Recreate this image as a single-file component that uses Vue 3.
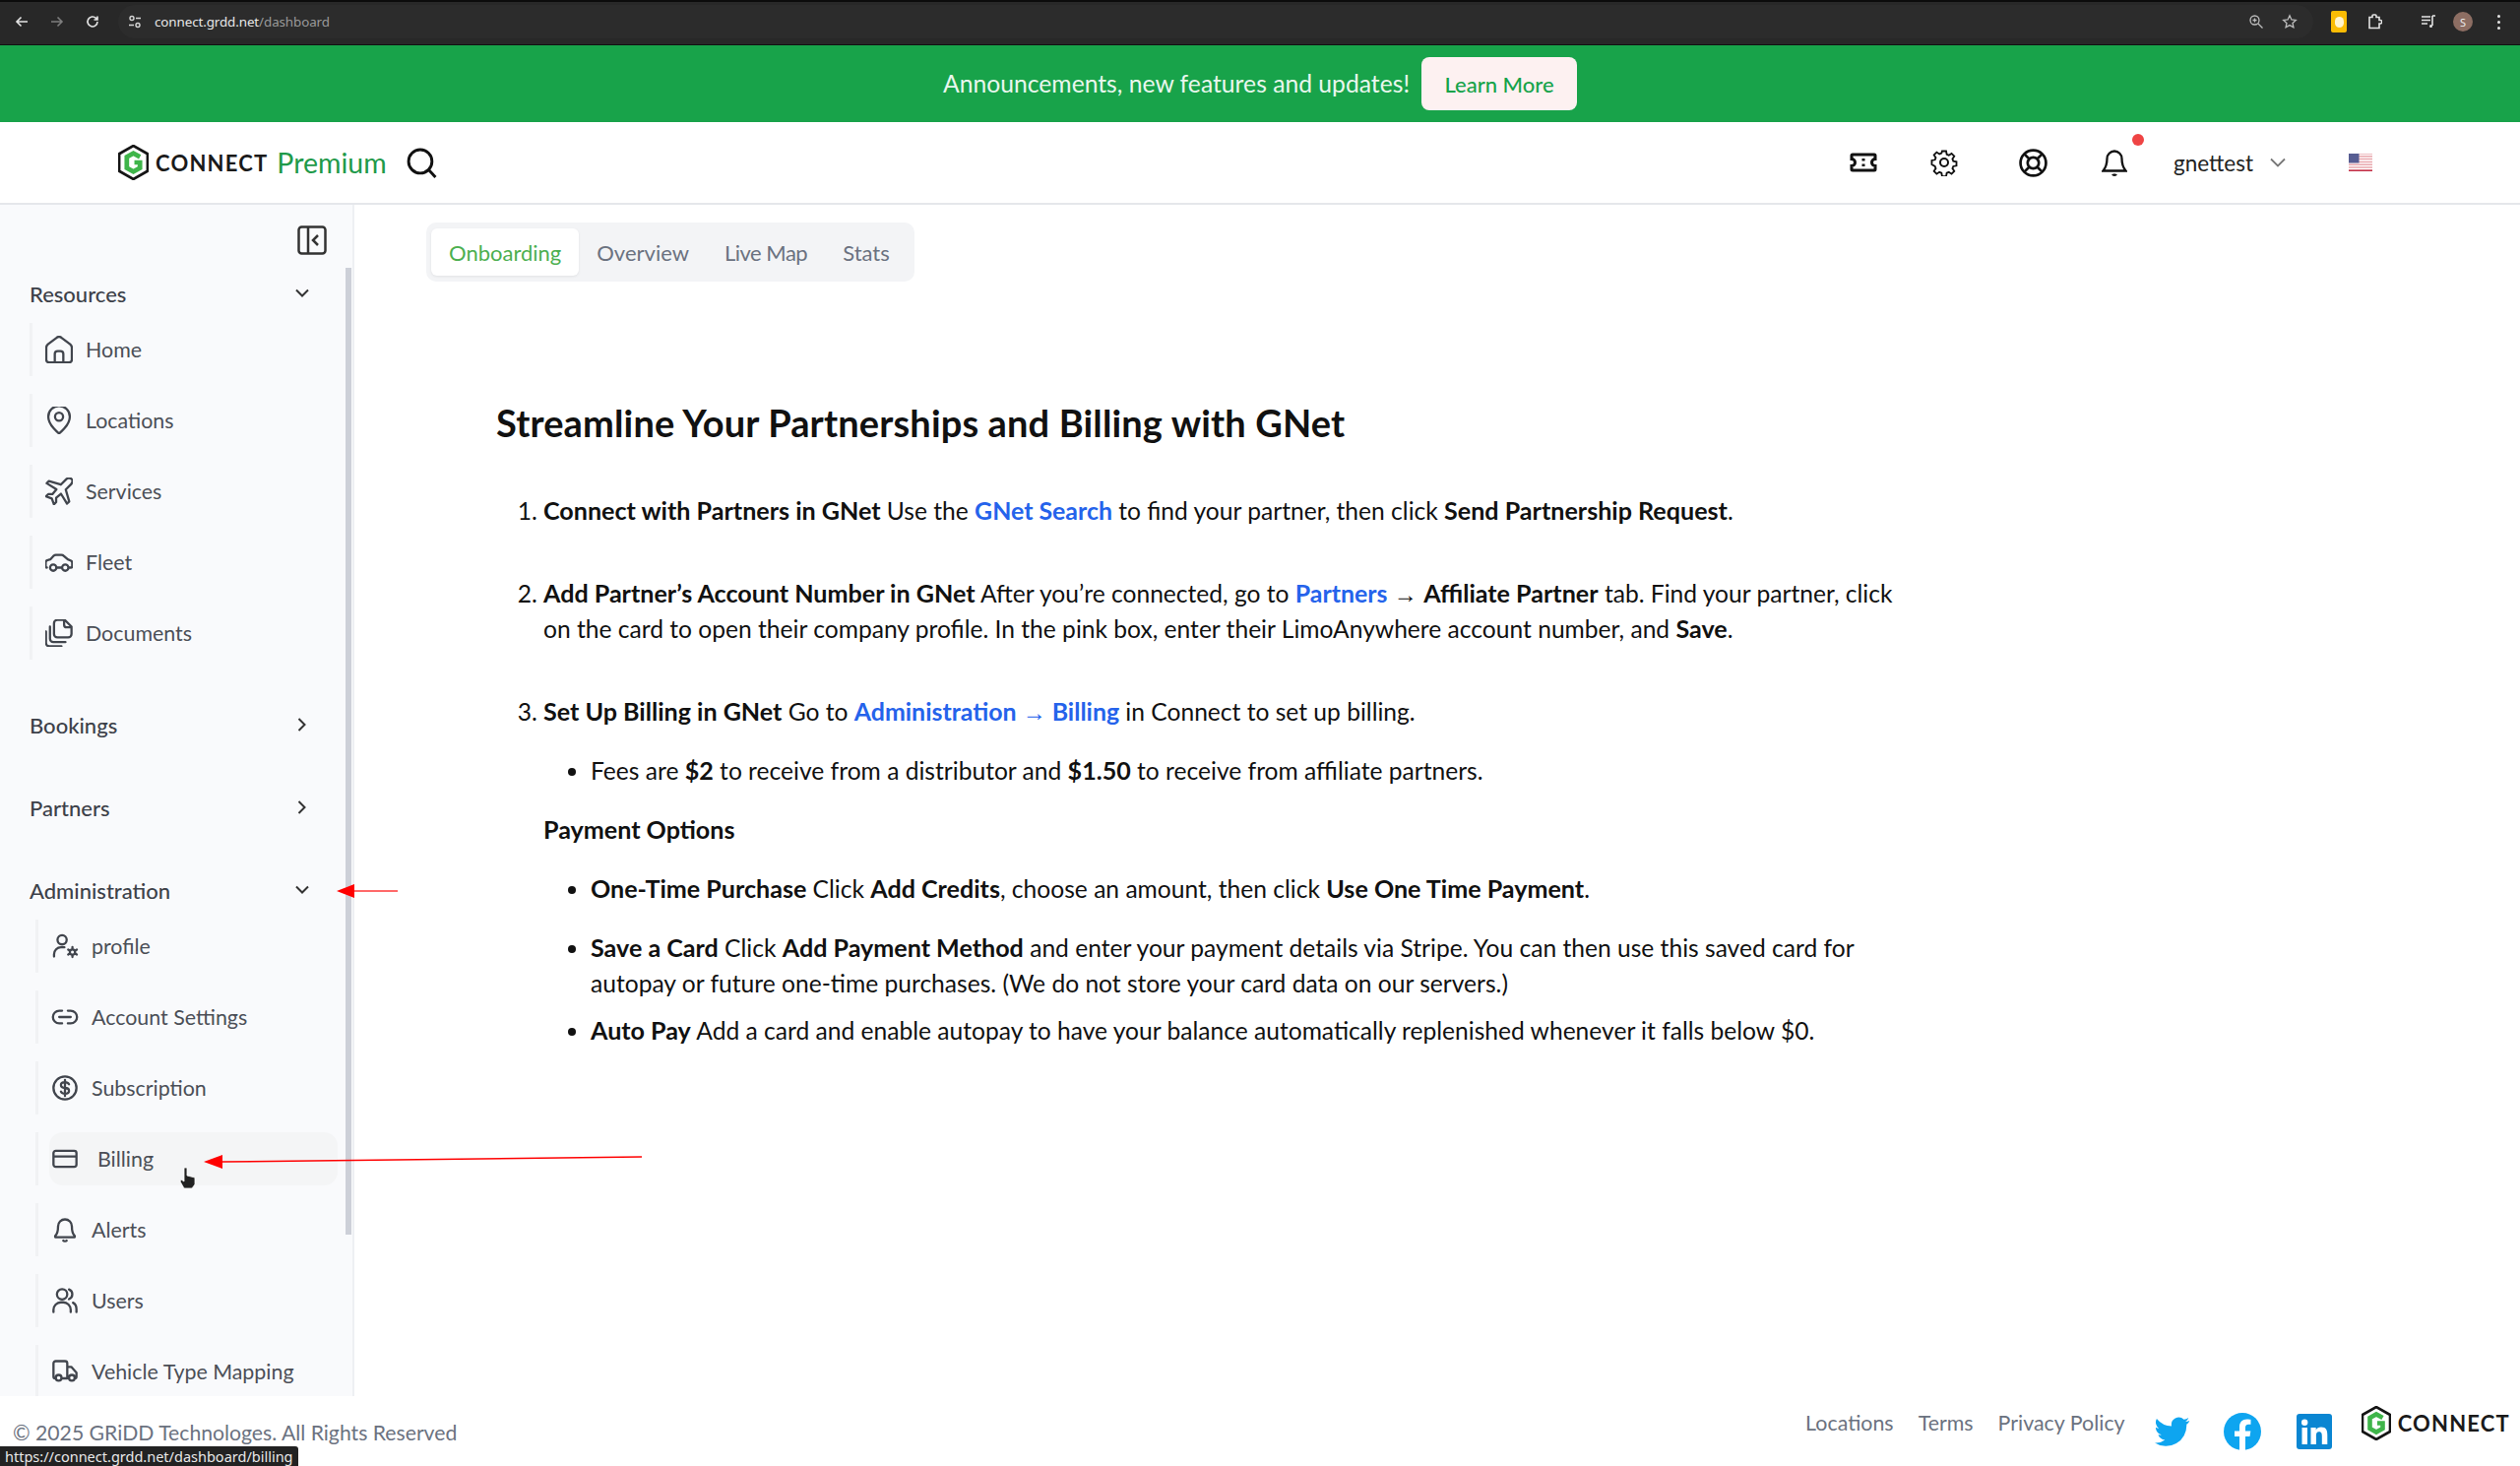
<script setup>
const resources = [
  { label: 'Home', icon: 'home' },
  { label: 'Locations', icon: 'pin' },
  { label: 'Services', icon: 'plane' },
  { label: 'Fleet', icon: 'car' },
  { label: 'Documents', icon: 'docs' },
]
const admin = [
  { label: 'profile', icon: 'usergear' },
  { label: 'Account Settings', icon: 'link' },
  { label: 'Subscription', icon: 'dollar' },
  { label: 'Billing', icon: 'card', hover: true },
  { label: 'Alerts', icon: 'bell' },
  { label: 'Users', icon: 'users' },
  { label: 'Vehicle Type Mapping', icon: 'truck' },
]
const paths = {
  home: 'M3 10.500c0-1 .5-1.700 1.200-2.300L10 3.800a3 3 0 0 1 4 0l5.800 4.400c.7.6 1.200 1.300 1.200 2.300V19a2 2 0 0 1-2 2H5a2 2 0 0 1-2-2Z M9 21v-6a2 2 0 0 1 2-2h2a2 2 0 0 1 2 2v6',
  pin: 'M12 22S4 16 4 9.500a8 8 0 0 1 16 0C20 16 12 22 12 22Z M12 12.500a3 3 0 1 0 0-6 3 3 0 0 0 0 6Z',
  plane: 'M20.500 3.500c-1-1-2.700-.7-3.800.4l-3.500 3.500L5 5 3.500 6.500 10.200 10.700 7.400 14H4.500L3 15.500l4 1.500 1.500 4 1.500-1.500v-3l3.300-2.800 4.200 6.800 1.500-1.500-2.400-8.200 3.500-3.500c1.100-1.100 1.400-2.800.9-3.300Z',
  car: 'M2.500 17C1.800 17 1.500 16.500 1.500 16v-3c0-1 .7-1.800 1.700-2l2-.5L8 7.500c.5-.4 1-.5 1.500-.5H14c.7 0 1.300.2 1.800.7l3.200 2.800 2.500 1c.7.400 1 1 1 1.700V16c0 .6-.4 1-1 1h-1 M9.800 17h4.500 M7.500 19.500a2.500 2.500 0 1 0 0-5 2.500 2.500 0 0 0 0 5Z M17 19.500a2.500 2.500 0 1 0 0-5 2.500 2.500 0 0 0 0 5Z',
  docs: 'M11 2.500h5.500l5 5V13a2.500 2.500 0 0 1-2.500 2.500h-8A2.500 2.500 0 0 1 8.500 13V5A2.500 2.500 0 0 1 11 2.500Z M16 2.500V6a2 2 0 0 0 2 2h3.500 M5.500 7.500v9a2.500 2.500 0 0 0 2.500 2.500h9 M2.500 11v8.500A2.500 2.500 0 0 0 5 22h9',
  usergear: 'M9.500 10.500a4 4 0 1 0 0-8 4 4 0 0 0 0 8Z M2.500 21v-2a6 6 0 0 1 6-6h3 M18.500 19.500a2.300 2.300 0 1 0 0-4.600 2.300 2.300 0 0 0 0 4.600Z M18.500 12.800v2 M18.500 19.500v2 M14.800 15l1.700 1 M20.600 18.300l1.700 1 M14.800 19.300l1.700-1 M20.600 16l1.700-1',
  link: 'M9.500 6.500H7a5.500 5.500 0 0 0 0 11h2.500 M14.500 6.500H17a5.500 5.500 0 0 1 0 11h-2.500 M7 12h10',
  dollar: 'M12 22a10 10 0 1 0 0-20 10 10 0 0 0 0 20Z M15.500 8.800c-.6-1.100-1.900-1.800-3.500-1.800-2 0-3.500 1-3.500 2.500S10 12 12 12s3.500 1 3.500 2.500S14 17 12 17c-1.600 0-2.900-.7-3.500-1.800 M12 5v14',
  card: 'M4 5h16a2 2 0 0 1 2 2v10a2 2 0 0 1-2 2H4a2 2 0 0 1-2-2V7a2 2 0 0 1 2-2Z M2 10h20',
  bell: 'M6 9a6 6 0 0 1 12 0c0 5 1 7 2.500 8.500v1h-17v-1C5 16 6 14 6 9Z M10.500 21.500c.5.700 2.500.700 3 0',
  users: 'M9.500 11a4.500 4.500 0 1 0 0-9 4.500 4.500 0 0 0 0 9Z M2 22v-2a6.500 6.500 0 0 1 6.500-6.500h2A6.500 6.500 0 0 1 17 20v2 M15.500 2.300a4.500 4.500 0 0 1 0 8.400 M19 13.800c2 1 3 3.200 3 5.700v2.500',
  truck: 'M3.500 18C2.700 18 2 17.300 2 16.500V5a2 2 0 0 1 2-2h8a2 2 0 0 1 2 2v13 M9.500 18H14 M14 8h3.500l4.500 5v3.500c0 .8-.7 1.500-1.500 1.500 M6.500 20a2.500 2.500 0 1 0 0-5 2.500 2.500 0 0 0 0 5Z M18 20a2.500 2.500 0 1 0 0-5 2.500 2.500 0 0 0 0 5Z',
}
const boxes = {
  home: '2.300 2.200 19.400 19.400',
  pin: '2 2 20 20.500',
  plane: '2.500 2.500 19 19',
  car: '1.200 1.800 21.800 21.800',
  docs: '2 2 20.500 20.500',
}
const box = (k) => boxes[k] || '0 0 24 24'
const hexOuter = 'M15 1 29 9v17L15 34 1 26V9Z'
const gMark = 'M21.500 12 15 8.400 8.500 12v11l6.500 3.600 6.500-3.600v-5.500H16'
</script>

<template>
  <div class="page">
    <div class="chrome">
      <div class="nav">
        <svg class="ci" viewBox="0 0 16 16"><path d="M14 8H3M7.500 3.500 3 8l4.500 4.500" /></svg>
        <svg class="ci dim" viewBox="0 0 16 16"><path d="M2 8h11M8.500 3.500 13 8l-4.500 4.500" /></svg>
        <svg class="ci" viewBox="0 0 16 16"><path d="M13 8a5 5 0 1 1-1.500-3.600L13 6M13 2.500V6H9.500" /></svg>
      </div>
      <div class="omni">
        <svg class="tune" viewBox="0 0 16 16"><circle cx="5" cy="4.500" r="2" /><path d="M9 4.500h5M2 11.500h5" /><circle cx="11" cy="11.500" r="2" /></svg>
        <span class="url">connect.grdd.net<span class="urlDim">/dashboard</span></span>
        <div class="omniRight">
          <svg class="ci small" viewBox="0 0 16 16"><circle cx="6.500" cy="6.500" r="4.500" /><path d="m10 10 4.500 4.500M6.500 4.500v4M4.500 6.500h4" /></svg>
          <svg class="ci small" viewBox="0 0 16 16"><path d="m8 1.800 1.900 4.100 4.400.5-3.300 3 .9 4.400L8 11.600l-3.900 2.200.9-4.400-3.300-3 4.400-.5Z" /></svg>
        </div>
      </div>
      <div class="exts">
        <span class="keep"><i class="bulb"></i></span>
        <svg class="ci ext" viewBox="0 0 16 16"><path d="M3 3.500h3V2a1 1 0 0 1 1-1h2a1 1 0 0 1 1 1v1.500h3v3h1a1.700 1.700 0 0 1 0 3.500h-1v4.500H3Z" /></svg>
        <svg class="ci media" viewBox="0 0 16 16"><path d="M1 3h9M1 6.500h9M1 10h6M12 2h3M12 2v10" /><circle cx="10.500" cy="12.500" r="1.500" class="fillw" /></svg>
        <span class="avatar">S</span>
        <span class="dots"><i></i><i></i><i></i></span>
      </div>
    </div>

    <div class="banner">
      <span class="bannerText">Announcements, new features and updates!</span>
      <button class="learn">Learn More</button>
    </div>

    <header class="top">
      <div class="brand">
        <svg class="hex" viewBox="0 0 30 35"><path :d="hexOuter" fill="#fff" stroke="#151515" stroke-width="2.600" stroke-linejoin="round" /><path :d="gMark" fill="none" stroke="#3fb54a" stroke-width="4.600" /></svg>
        <span class="connect">CONNECT</span>
        <span class="premium">Premium</span>
        <svg class="search" viewBox="0 0 30 30"><circle cx="13.500" cy="13.500" r="11.500" /><path d="m22 22 6.500 7" /></svg>
      </div>
      <div class="tools">
        <svg class="tool ticket" viewBox="0 0 28 20"><path d="M3 2h22a1 1 0 0 1 1 1v3.500a3.500 3.500 0 0 0 0 7V17a1 1 0 0 1-1 1H3a1 1 0 0 1-1-1v-3.500a3.500 3.500 0 0 0 0-7V3a1 1 0 0 1 1-1Z" /><path d="M14 6v2.500M14 11.500V14" /></svg>
        <svg class="tool gear" viewBox="0 0 28 28"><circle cx="14" cy="14" r="4" /><path d="M11.800 1.500h4.400l.7 3.600 2.300 1 3-2 3 3.100-2 3 .9 2.300 3.500.7v4.400l-3.500.7-.9 2.300 2 3-3 3.100-3-2-2.300 1-.7 3.600h-4.400l-.7-3.600-2.300-1-3 2-3-3.100 2-3-.9-2.300L.4 16.200v-4.400l3.500-.7.900-2.300-2-3 3-3.100 3 2 2.300-1Z" transform="translate(1.100 1.100) scale(.92)" /></svg>
        <svg class="tool ring" viewBox="0 0 28 28"><circle cx="14" cy="14" r="12.500" /><circle cx="14" cy="14" r="5.500" /><path d="m5.200 5.200 5 5M22.800 5.200l-5 5M5.200 22.800l5-5M22.800 22.800l-5-5" /></svg>
        <div class="bellWrap">
          <svg class="tool bellTop" viewBox="0 0 26 28"><path d="M5.500 10a7.500 7.500 0 0 1 15 0c0 6 1.500 9.500 4 12.500h-23C4 19.500 5.500 16 5.500 10Z" /><path d="M11 26c.6 1 3.400 1 4 0" /></svg>
          <i class="redDot"></i>
        </div>
        <span class="user">gnettest</span>
        <svg class="userChev" viewBox="0 0 16 10"><path d="m1 1.500 7 7 7-7" /></svg>
        <svg class="flag" viewBox="0 0 24 18"><rect width="24" height="18" fill="#e8a7ad" /><path d="M0 1.400h24M0 4.200h24M0 7h24M0 9.800h24M0 12.600h24M0 15.400h24" stroke="#fff" stroke-width="1.300" /><path d="M0 17.300h24" stroke="#c4344c" stroke-width="1.400" /><rect width="10.500" height="9.500" fill="#575d92" /></svg>
      </div>
    </header>

    <div class="main">
      <aside class="side">
        <div class="collapseRow">
          <svg class="collapse" viewBox="0 0 30 30"><rect x="1.500" y="1.500" width="27" height="27" rx="3" /><path d="M11 2v26M21 10l-5 5 5 5" /></svg>
        </div>
        <div class="secHead first"><span>Resources</span><svg class="chev" viewBox="0 0 16 10"><path d="m2 1.500 6 6 6-6" /></svg></div>
        <ul class="items">
          <li v-for="it in resources" :key="it.label" class="item">
            <svg class="ico" :viewBox="box(it.icon)"><path :d="paths[it.icon]" /></svg>
            <span>{{ it.label }}</span>
          </li>
        </ul>
        <div class="secHead closed bookings"><span>Bookings</span><svg class="chev right" viewBox="0 0 10 16"><path d="m1.500 2 6 6-6 6" /></svg></div>
        <div class="secHead closed"><span>Partners</span><svg class="chev right" viewBox="0 0 10 16"><path d="m1.500 2 6 6-6 6" /></svg></div>
        <div class="secHead closed"><span>Administration</span><svg class="chev" viewBox="0 0 16 10"><path d="m2 1.500 6 6 6-6" /></svg></div>
        <ul class="items nested">
          <li v-for="it in admin" :key="it.label" class="item" :class="{ hovered: it.hover }">
            <svg class="ico" :viewBox="box(it.icon)"><path :d="paths[it.icon]" /></svg>
            <span>{{ it.label }}</span>
          </li>
        </ul>
        <div class="scrollThumb"></div>
      </aside>

      <main class="content">
        <nav class="tabs">
          <span class="tab active">Onboarding</span>
          <span class="tab">Overview</span>
          <span class="tab">Live Map</span>
          <span class="tab">Stats</span>
        </nav>
        <article class="doc">
          <h1>Streamline Your Partnerships and Billing with GNet</h1>
          <ol>
            <li><b>Connect with Partners in GNet</b> Use the <a>GNet Search</a> to find your partner, then click <b>Send Partnership Request</b>.</li>
            <li><b>Add Partner’s Account Number in GNet</b> After you’re connected, go to <a>Partners</a> <span class="arr">→</span> <b>Affiliate Partner</b> tab. Find your partner, click on the card to open their company profile. In the pink box, enter their LimoAnywhere account number, and <b>Save</b>.</li>
            <li><b>Set Up Billing in GNet</b> Go to <a>Administration <span class="arr">→</span> Billing</a> in Connect to set up billing.
              <ul class="fees"><li>Fees are <b>$2</b> to receive from a distributor and <b>$1.50</b> to receive from affiliate partners.</li></ul>
              <p><b>Payment Options</b></p>
              <ul class="opts">
                <li><b>One-Time Purchase</b> Click <b>Add Credits</b>, choose an amount, then click <b>Use One Time Payment</b>.</li>
                <li><b>Save a Card</b> Click <b>Add Payment Method</b> and enter your payment details via Stripe. You can then use this saved card for autopay or future one-time purchases. (We do not store your card data on our servers.)</li>
                <li><b>Auto Pay</b> Add a card and enable autopay to have your balance automatically replenished whenever it falls below $0.</li>
              </ul>
            </li>
          </ol>
        </article>
      </main>
    </div>

    <footer class="foot">
      <span class="copy">© 2025 GRiDD Technologes. All Rights Reserved</span>
      <div class="footRight">
        <a>Locations</a><a>Terms</a><a>Privacy Policy</a>
        <svg class="twitter" viewBox="0 0 24 24"><path fill="#0ea5f0" d="M23.500 4.600c-.9.400-1.800.7-2.800.8 1-.6 1.800-1.600 2.100-2.700-.9.600-2 1-3.100 1.200A4.900 4.900 0 0 0 11.400 8.400 13.900 13.900 0 0 1 1.300 3.300a4.900 4.900 0 0 0 1.500 6.500c-.8 0-1.500-.2-2.200-.6 0 2.400 1.700 4.400 3.900 4.900-.7.200-1.500.2-2.200.1.600 1.900 2.400 3.300 4.600 3.400A9.900 9.900 0 0 1 0 19.600 13.900 13.900 0 0 0 21.500 7.200c1-.7 1.800-1.600 2-2.600Z" /></svg>
        <svg class="fb" viewBox="0 0 38 38"><circle cx="19" cy="19" r="19" fill="#0ea5f0" /><path fill="#fff" d="M16 38V24h-5v-5.500h5v-4.200c0-5 3-7.800 7.500-7.800 2.200 0 4 .3 4 .3v4.900h-2.300c-2.400 0-3.200 1.500-3.200 3v3.800h5.400l-.9 5.500h-4.500v14Z" /></svg>
        <svg class="li" viewBox="0 0 36 36"><rect width="36" height="36" rx="3" fill="#0a86d2" /><rect x="5.500" y="14" width="5.500" height="17" fill="#fff" /><circle cx="8.200" cy="8.800" r="3.200" fill="#fff" /><path fill="#fff" d="M14.500 14h5.200v2.400c.8-1.500 2.700-2.800 5.300-2.800 5.300 0 6.300 3.500 6.300 8V31h-5.500v-8.300c0-2-.1-4.500-2.800-4.500s-3.100 2.100-3.100 4.400V31h-5.400Z" /></svg>
        <div class="footLogo">
          <svg class="hex" viewBox="0 0 30 35"><path :d="hexOuter" fill="#fff" stroke="#151515" stroke-width="2.600" stroke-linejoin="round" /><path :d="gMark" fill="none" stroke="#3fb54a" stroke-width="4.600" /></svg>
          <span class="connect">CONNECT</span>
        </div>
      </div>
    </footer>

    <div class="status">https://connect.grdd.net/dashboard/billing</div>

    <svg class="arrows" viewBox="0 0 2560 1489" width="2560" height="1489">
      <path d="M360 905h44" stroke="#ff6a6a" stroke-width="2" />
      <path d="M342 905 360 898v14Z" fill="#f00" />
      <path d="M226 1180 652 1175" stroke="#f00" stroke-width="1.500" />
      <path d="M207 1180 226 1173v14Z" fill="#f00" />
      <path d="M187 1186h3v8l8 2v7l-3 4h-8l-4-7 1-2 3 2Z" fill="#222" stroke="#fff" stroke-width=".8" />
    </svg>
  </div>
</template>

<style>
html, body { margin: 0; background: #fff; }
</style>

<style scoped>
.page { position: relative; width: 2560px; height: 1489px; overflow: hidden; font-family: "Lato", "Open Sans", sans-serif; color: #111; display: flex; flex-direction: column; background: #fff; }
.chrome { height: 46px; box-sizing: border-box; background: #282828; border-top: 2px solid #0c0c0c; border-bottom: 1px solid #111; display: flex; align-items: center; padding: 0 0 3px 14px; }
.nav { display: flex; gap: 20px; width: 106px; }
.ci { width: 16px; height: 16px; fill: none; stroke: #e3e3e3; stroke-width: 1.600; }
.ci.dim { stroke: #7d7d7d; }
.omni { width: 2230px; height: 34px; box-sizing: border-box; background: #2c2c2c; border-radius: 17px; display: flex; align-items: center; padding: 0 16px 0 9px; }
.tune { width: 16px; height: 16px; fill: none; stroke: #d5d5d5; stroke-width: 1.400; margin-right: 12px; }
.url { font-family: "Noto Sans", sans-serif; font-size: 13.400px; color: #e8e8e8; letter-spacing: -.1px; }
.urlDim { color: #9a9a9a; }
.omniRight { margin-left: auto; display: flex; gap: 18px; }
.ci.small { stroke: #bdbdbd; stroke-width: 1.300; }
.exts { display: flex; align-items: center; margin-left: 18px; }
.keep { width: 16px; height: 22px; border-radius: 2px; background: #fbbc04; display: flex; align-items: center; justify-content: center; }
.bulb { width: 9px; height: 11px; border-radius: 5px; background: #fff4d0; }
.ci.ext { margin-left: 20px; }
.ci.media { margin-left: 39px; }
.fillw { fill: #e3e3e3; stroke: none; }
.avatar { margin-left: 17px; width: 20px; height: 20px; border-radius: 50%; background: #8d6e63; color: #ececec; font-family: "Noto Sans", sans-serif; font-size: 11px; display: flex; align-items: center; justify-content: center; }
.dots { margin-left: 25px; display: flex; flex-direction: column; gap: 3px; }
.dots i { width: 3px; height: 3px; border-radius: 50%; background: #e3e3e3; display: block; }

.banner { height: 78px; background: #18a34a; display: flex; align-items: center; justify-content: center; gap: 12px; }
.bannerText { color: #e9f7ee; font-size: 24.700px; transform: translateY(-1px); }
.learn { width: 158px; height: 54px; border: 0; border-radius: 8px; background: #fdf1f1; color: #16a34a; font: 500 22px "Lato", sans-serif; }

.top { height: 84px; box-sizing: border-box; border-bottom: 2px solid #e5e7eb; display: flex; align-items: center; justify-content: space-between; }
.brand { display: flex; align-items: center; padding-left: 120px; }
.hex { width: 31px; height: 36px; flex: none; }
.connect { font-family: "Lato", sans-serif; font-weight: 700; font-size: 22px; letter-spacing: 1.200px; color: #1a1a1a; margin-left: 7px; }
.premium { font-size: 28.500px; color: #1f9a4a; margin-left: 9px; }
.search { width: 31px; height: 31px; margin-left: 20px; fill: none; stroke: #111; stroke-width: 2.800; }
.tools { display: flex; align-items: center; padding-right: 150px; }
.tool { fill: none; stroke: #111; stroke-width: 2; flex: none; }
.ticket { width: 28px; height: 20px; stroke-width: 3; }
.gear { width: 28px; height: 28px; margin-left: 54.500px; }
.ring { width: 29px; height: 29px; margin-left: 62px; stroke-width: 2.600; }
.bellWrap { position: relative; margin-left: 54.500px; display: flex; }
.bellTop { width: 26px; height: 28px; stroke-width: 2.300; }
.redDot { position: absolute; left: 31px; top: -15px; width: 12px; height: 12px; border-radius: 50%; background: #ef4444; }
.user { margin-left: 47px; font-size: 22.500px; color: #222; }
.userChev { width: 16px; height: 10px; margin-left: 17px; fill: none; stroke: #777; stroke-width: 1.800; }
.flag { width: 24px; height: 18px; margin-left: 64px; }

.main { flex: 1; min-height: 0; display: flex; }
.side { position: relative; width: 360px; flex: none; box-sizing: border-box; background: #f9fafc; border-right: 2px solid #eef0f3; overflow: hidden; }
.collapseRow { height: 64px; box-sizing: border-box; padding: 21px 26px 0 0; display: flex; align-items: flex-start; justify-content: flex-end; }
.collapse { width: 30px; height: 30px; fill: none; stroke: #333; stroke-width: 2.500; }
.secHead { display: flex; align-items: center; justify-content: space-between; width: 285px; margin-left: 30px; height: 40px; font-size: 22px; font-weight: 500; color: #3d4149; }
.secHead.first { margin-top: 6px; }
.secHead.closed { margin-top: 44px; }
.secHead.bookings { margin-top: 46px; }
.chev { width: 16px; height: 10px; fill: none; stroke: #333; stroke-width: 2; }
.chev.right { width: 10px; height: 16px; margin-right: 3px; }
.items { list-style: none; margin: 10px 0 0 30px; padding: 0; display: flex; flex-direction: column; gap: 18px; }
.item { height: 54px; flex: none; display: flex; align-items: center; box-sizing: border-box; border-left: 3px solid #f1f2f4; padding-left: 13px; gap: 13px; font-size: 21.400px; color: #4b4f57; }
.ico { width: 28px; height: 28px; fill: none; stroke: #41454d; stroke-width: 2.300; flex: none; stroke-linecap: round; stroke-linejoin: round; }
.ico path { vector-effect: non-scaling-stroke; }
.nested { margin-left: 36px; }
.nested .item.hovered { position: relative; z-index: 0; gap: 19px; }
.nested .item.hovered::before { content: ""; position: absolute; z-index: -1; left: 11px; top: 0; width: 293px; height: 54px; background: #f4f5f6; border-radius: 14px; }
.scrollThumb { position: absolute; left: 351px; top: 64px; width: 6px; height: 982px; background: #cdd0d8; }

.content { flex: 1; min-width: 0; padding: 18px 0 0 73px; }
.tabs { display: inline-flex; align-items: center; box-sizing: border-box; height: 60px; width: 496px; padding: 0 5px; background: #f3f4f6; border-radius: 10px; font-size: 22px; color: #6b7280; white-space: nowrap; }
.tab { padding: 0 18px; height: 48px; display: flex; align-items: center; }
.tab:nth-child(3) { letter-spacing: -.5px; }
.tab.active { background: #fff; border-radius: 6px; color: #4caf50; box-shadow: 0 1px 3px rgba(0,0,0,.08); }
.doc { padding-left: 71px; width: 1505px; box-sizing: border-box; font-size: 24.600px; line-height: 36px; color: #111; }
.doc h1 { font-size: 38px; letter-spacing: .14px; font-weight: 700; line-height: 48px; margin: 119px 0 0; }
.doc ol { margin: 48px 0 0; padding-left: 48px; }
.doc ol > li { margin-bottom: 48px; }
.doc ul { margin: 0; padding-left: 48px; list-style: disc; }
.doc b { font-size: 25.100px; line-height: 0; }
.doc a { color: #2563eb; font-weight: 700; font-size: 24.900px; line-height: 0; }
.arr { font-family: "Liberation Sans", sans-serif; font-size: 24px; line-height: 0; font-weight: 400; }
.fees { margin-top: 24px !important; }
.doc p { margin: 24px 0 24px; }
.opts li + li { margin-top: 24px; }
.opts li:last-child { margin-top: 12px; }

.foot { height: 71px; flex: none; position: relative; display: flex; justify-content: space-between; background: #fff; }
.copy { font-size: 21.200px; color: #6b7280; padding: 24px 0 0 13px; }
.footRight { display: flex; align-items: center; height: 71px; padding-right: 10px; font-size: 21.400px; color: #6b7280; }
.footRight a { margin-right: 25px; transform: translateY(-9.500px); }
.twitter { width: 36px; height: 36px; margin-left: 5px; }
.fb { width: 38px; height: 38px; margin-left: 34px; }
.li { width: 36px; height: 36px; margin-left: 36px; }
.footLogo { display: flex; align-items: center; margin-left: 30px; transform: translateY(-8px); }
.footLogo .hex { width: 30px; height: 35px; }
.status { position: absolute; left: 0; bottom: 0; height: 20px; padding: 0 5px; background: #222; border-top-right-radius: 3px; color: #e8e8e8; font: 14.500px/20px "Noto Sans", sans-serif; }
.arrows { position: absolute; left: 0; top: 0; pointer-events: none; }
</style>
